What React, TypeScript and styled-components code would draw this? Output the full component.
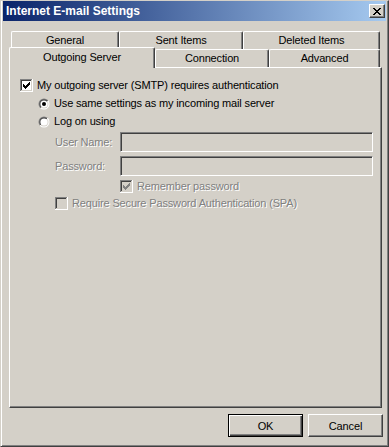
import type { FC, ReactNode } from "react";
import { createGlobalStyle, styled } from "styled-components";

const FACE = "#d4d0c8";
const SHADOW = "#808080";
const DARK = "#404040";

const GlobalStyle = createGlobalStyle`
  html, body {
    margin: 0;
    padding: 0;
    background: ${FACE};
  }
  * {
    box-sizing: border-box;
  }
`;

const Window = styled.div`
  width: 389px;
  height: 447px;
  background: ${FACE};
  border: 1px solid;
  border-color: ${FACE} ${DARK} ${DARK} ${FACE};
  box-shadow: inset 1px 0 #fff, inset -1px -1px ${SHADOW};
  padding: 0 2px 0 2px;
  font-family: "Liberation Sans", Arial, sans-serif;
  font-size: 11px;
  letter-spacing: -0.15px;
  color: #000;
  display: flex;
  flex-direction: column;
`;

const TitleBar = styled.div`
  height: 20px;
  display: flex;
  align-items: center;
  justify-content: space-between;
  padding: 0 0 0 3px;
  background: linear-gradient(to right, #0a246a, #a6caf0);
`;

const Title = styled.span`
  color: #fff;
  font-weight: bold;
  font-size: 12px;
  letter-spacing: 0;
`;

const CloseButton = styled.div`
  width: 16px;
  height: 14px;
  margin-right: 1px;
  background: ${FACE};
  border: 1px solid;
  border-color: #fff ${DARK} ${DARK} #fff;
  box-shadow: inset -1px -1px ${SHADOW};
  display: flex;
  align-items: center;
  justify-content: center;
`;

const Body = styled.div`
  padding: 11px 4px 0 6px;
  display: flex;
  flex-direction: column;
`;

const TabRow = styled.div<{ $back?: boolean }>`
  display: flex;
  align-items: flex-end;
  height: ${({ $back }) => ($back ? "17px" : "20px")};
  margin-top: ${({ $back }) => ($back ? "0" : "-2px")};
  padding-left: ${({ $back }) => ($back ? "2px" : "0")};
  position: relative;
  z-index: ${({ $back }) => ($back ? 0 : 1)};
`;

const Tab = styled.div<{ $width: number; $active?: boolean }>`
  width: ${({ $width }) => $width}px;
  height: ${({ $active }) => ($active ? "21px" : "18px")};
  margin-bottom: ${({ $active }) => ($active ? "-1px" : "0")};
  background: ${FACE};
  border-top: 1px solid #fff;
  border-left: 1px solid #fff;
  border-right: 1px solid ${DARK};
  border-radius: 2px 2px 0 0;
  box-shadow: inset -1px 0 ${SHADOW};
  display: flex;
  justify-content: center;
  padding-top: ${({ $active }) => ($active ? "3px" : "2px")};
  white-space: nowrap;
  position: relative;
  z-index: ${({ $active }) => ($active ? 2 : 0)};
`;

const Panel = styled.div`
  height: 341px;
  border: 1px solid;
  border-color: #fff ${DARK} ${DARK} #fff;
  box-shadow: inset -1px -1px ${SHADOW};
  padding: 11px 0 0 10px;
  display: flex;
  flex-direction: column;
`;

const OptionRow = styled.label<{ $indent?: number; $top?: number }>`
  display: flex;
  align-items: center;
  gap: 4px;
  height: 13px;
  margin-left: ${({ $indent }) => $indent ?? 0}px;
  margin-top: ${({ $top }) => $top ?? 0}px;
  line-height: 13px;
`;

const Caption = styled.span<{ $disabled?: boolean }>`
  color: ${({ $disabled }) => ($disabled ? SHADOW : "#000")};
  text-shadow: ${({ $disabled }) => ($disabled ? "1px 1px 0 #fff" : "none")};
  white-space: nowrap;
`;

const FieldRow = styled.div<{ $top: number }>`
  display: flex;
  align-items: center;
  margin-top: ${({ $top }) => $top}px;
  margin-left: 35px;
`;

const FieldLabel = styled(Caption)`
  width: 65px;
`;

const TextBox = styled.div`
  width: 253px;
  height: 20px;
  background: ${FACE};
  border: 1px solid;
  border-color: ${SHADOW} #fff #fff ${SHADOW};
  box-shadow: inset 1px 1px ${DARK}, inset -1px -1px ${FACE};
`;

const ButtonBar = styled.div`
  display: flex;
  justify-content: flex-end;
  gap: 5px;
  margin-top: 6px;
  margin-right: -1px;
`;

const Button = styled.div<{ $default?: boolean }>`
  width: 75px;
  height: 23px;
  display: flex;
  align-items: center;
  justify-content: center;
  background: ${FACE};
  border: 1px solid;
  border-color: ${({ $default }) =>
    $default ? "#000" : `#fff ${DARK} ${DARK} #fff`};
  box-shadow: ${({ $default }) =>
    $default
      ? `inset 1px 1px #fff, inset -1px -1px ${DARK}, inset -2px -2px ${SHADOW}`
      : `inset -1px -1px ${SHADOW}`};
`;

const CheckMark: FC<{ color: string }> = ({ color }) => (
  <>
    {[5, 6, 7, 6, 5, 4, 3].map((y, i) => (
      <rect key={i} x={3 + i} y={y} width={1} height={3} fill={color} />
    ))}
  </>
);

const CheckBox: FC<{ checked?: boolean; disabled?: boolean }> = ({
  checked,
  disabled,
}) => (
  <svg width="13" height="13" shapeRendering="crispEdges">
    <rect x="0" y="0" width="13" height="13" fill="#fff" />
    <rect x="0" y="0" width="12" height="1" fill={SHADOW} />
    <rect x="0" y="0" width="1" height="12" fill={SHADOW} />
    <rect x="1" y="1" width="10" height="1" fill={DARK} />
    <rect x="1" y="1" width="1" height="10" fill={DARK} />
    <rect x="1" y="11" width="11" height="1" fill={FACE} />
    <rect x="11" y="1" width="1" height="11" fill={FACE} />
    <rect x="2" y="2" width="9" height="9" fill={disabled ? FACE : "#fff"} />
    {checked && <CheckMark color={disabled ? SHADOW : "#000"} />}
  </svg>
);

const Radio: FC<{ checked?: boolean }> = ({ checked }) => (
  <svg width="12" height="12" viewBox="0 0 12 12">
    <defs>
      <linearGradient id="rOuter" x1="0" y1="0" x2="1" y2="1">
        <stop offset="0.5" stopColor={SHADOW} />
        <stop offset="0.5" stopColor="#fff" />
      </linearGradient>
      <linearGradient id="rInner" x1="0" y1="0" x2="1" y2="1">
        <stop offset="0.5" stopColor={DARK} />
        <stop offset="0.5" stopColor={FACE} />
      </linearGradient>
    </defs>
    <circle cx="6" cy="6" r="5.5" fill="url(#rOuter)" />
    <circle cx="6" cy="6" r="4.5" fill="url(#rInner)" />
    <circle cx="6" cy="6" r="3.6" fill="#fff" />
    {checked && <circle cx="6" cy="6" r="2" fill="#000" />}
  </svg>
);

const Option: FC<{
  control: ReactNode;
  children: ReactNode;
  indent?: number;
  top?: number;
  disabled?: boolean;
}> = ({ control, children, indent, top, disabled }) => (
  <OptionRow $indent={indent} $top={top}>
    {control}
    <Caption $disabled={disabled}>{children}</Caption>
  </OptionRow>
);

const App: FC = () => (
  <>
    <GlobalStyle />
    <Window>
      <TitleBar>
        <Title>Internet E-mail Settings</Title>
        <CloseButton>
          <svg width="8" height="7" shapeRendering="crispEdges">
            {[0, 1, 2, 3, 4, 5, 6].map((i) => (
              <g key={i}>
                <rect x={i} y={i} width={2} height={1} fill="#000" />
                <rect x={6 - i} y={i} width={2} height={1} fill="#000" />
              </g>
            ))}
          </svg>
        </CloseButton>
      </TitleBar>
      <Body>
        <TabRow $back>
          <Tab $width={108}>General</Tab>
          <Tab $width={124}>Sent Items</Tab>
          <Tab $width={137}>Deleted Items</Tab>
        </TabRow>
        <TabRow>
          <Tab $width={146} $active>
            Outgoing Server
          </Tab>
          <Tab $width={114}>Connection</Tab>
          <Tab $width={111}>Advanced</Tab>
        </TabRow>
        <Panel>
          <Option control={<CheckBox checked />}>
            My outgoing server (SMTP) requires authentication
          </Option>
          <Option control={<Radio checked />} indent={18} top={5}>
            Use same settings as my incoming mail server
          </Option>
          <Option control={<Radio />} indent={18} top={5}>
            Log on using
          </Option>
          <FieldRow $top={4}>
            <FieldLabel $disabled>User Name:</FieldLabel>
            <TextBox />
          </FieldRow>
          <FieldRow $top={4}>
            <FieldLabel $disabled>Password:</FieldLabel>
            <TextBox />
          </FieldRow>
          <Option control={<CheckBox checked disabled />} indent={100} top={4} disabled>
            Remember password
          </Option>
          <Option control={<CheckBox disabled />} indent={35} top={4} disabled>
            Require Secure Password Authentication (SPA)
          </Option>
        </Panel>
        <ButtonBar>
          <Button $default>OK</Button>
          <Button>Cancel</Button>
        </ButtonBar>
      </Body>
    </Window>
  </>
);

export default App;
